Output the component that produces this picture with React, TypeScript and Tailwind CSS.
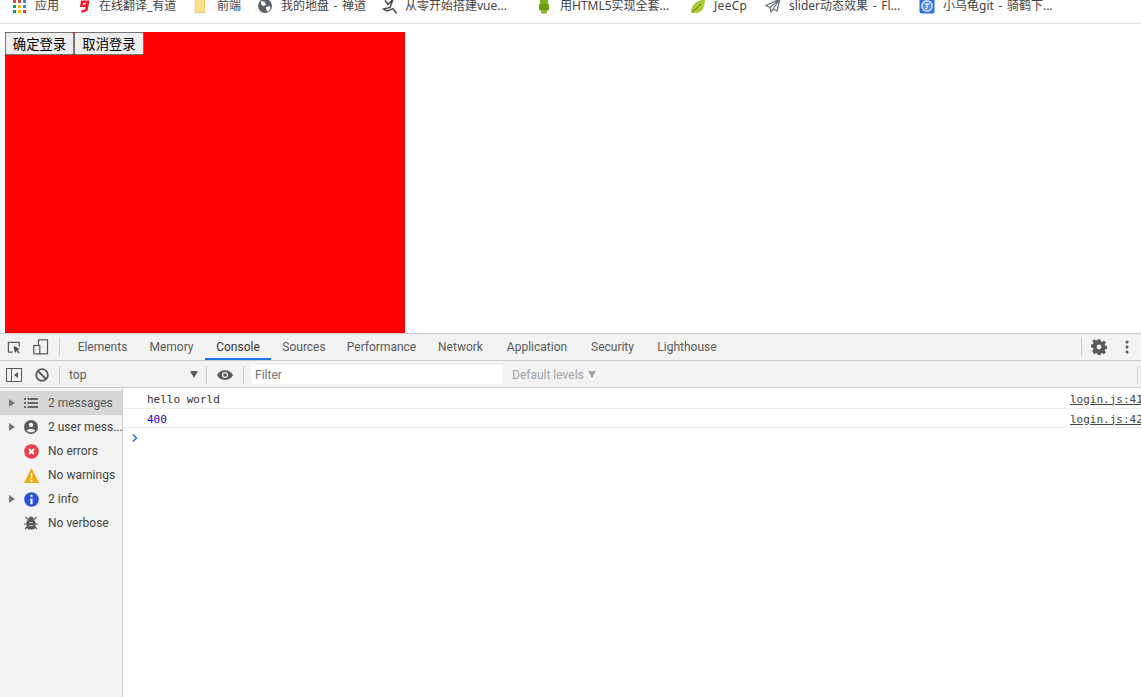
import React from "react";

const ui = "font-['Roboto','Noto_Sans_CJK_SC',sans-serif]";
const marks = "font-['Noto_Sans','Noto_Sans_CJK_SC',sans-serif]";

function Apps() {
  const c = ["#db4437", "#db4437", "#4285f4", "#0f9d58", "#f4b400", "#4285f4", "#0f9d58", "#f4b400", "#db4437"];
  return (
    <svg width="14" height="14" viewBox="0 0 14 14">
      {c.map((f, i) => (
        <rect key={i} x={1 + (i % 3) * 5} y={1 + Math.floor(i / 3) * 5} width="3" height="3" fill={f} />
      ))}
    </svg>
  );
}
const Y9 = () => (
  <svg width="14" height="16" viewBox="0 0 14 16">
    <path d="M4 2.500h8.500L10.500 13 4 15l.5-2.500 3.500-1 .4-2.500H3zM6.300 5l-.6 1.500h3L9 5z" fill="#ee1c2e" fillRule="evenodd" />
  </svg>
);
const Folder = () => (
  <svg width="14" height="16" viewBox="0 0 14 16">
    <path d="M1.500 1h7l1 1.500V1h1v13.500h-9.500z" fill="#fbe08f" stroke="#f2cd6b" strokeWidth="1" />
  </svg>
);
const Globe = () => (
  <svg width="16" height="16" viewBox="0 0 16 16">
    <circle cx="8" cy="8" r="7" fill="#5f6368" />
    <path d="M4 3l4 1 1 3-3 1-2-2zM9 9l4-1 .5 3-3 3-1-2z" fill="#fff" />
  </svg>
);
const Swirl = () => (
  <svg width="16" height="16" viewBox="0 0 16 16" fill="none" stroke="#444" strokeWidth="1.400">
    <path d="M3 2.500 6 6.500 11 1.500 8 9.500 1.500 11 5 13 11 10.500 14.500 15.500" />
  </svg>
);
const Android = () => (
  <svg width="14" height="16" viewBox="0 0 14 16">
    <rect x="3" y="0.500" width="8" height="6" rx="3" fill="#7cad1e" />
    <rect x="2" y="5.500" width="10" height="7" rx="1.500" fill="#6d9e14" />
    <rect x="4" y="12" width="6" height="3.500" rx="1" fill="#8ab82a" />
  </svg>
);
const Leaf = () => (
  <svg width="16" height="16" viewBox="0 0 16 16">
    <path d="M15 1C15 9 12 15 6 15H1.500C0 9 5 3 15 1z" fill="#a9c832" />
    <path d="M2 14C5 11 8 10 11 6" stroke="#557a10" fill="none" />
  </svg>
);
const Plane = () => (
  <svg width="16" height="16" viewBox="0 0 16 16" fill="none" stroke="#6b7280" strokeWidth="1.200">
    <path d="M15 1 1 7.500l4 2 1 4.500 2.500-3 3.500 2zM15 1 5 9.500M15 1 6 14" />
  </svg>
);
const Turtle = () => (
  <svg width="16" height="16" viewBox="0 0 16 16">
    <rect x="0.500" y="0.500" width="15" height="15" rx="2" fill="#2a6ff0" />
    <circle cx="8" cy="8" r="5.200" fill="#5a8ff2" stroke="#dfeaff" strokeWidth="1.400" />
    <path d="M5.500 6h5M8 6v4.500M6 10.500h2" stroke="#fff" strokeWidth="1.200" fill="none" />
  </svg>
);

const bookmarks: [React.ReactNode, string, string, string][] = [
  [<Apps />, "应用", "w-[65px]", "ml-[9px]"],
  [<Y9 />, "在线翻译_有道", "w-[117px]", "ml-[8px]"],
  [<Folder />, "前端", "w-[63px]", "ml-[9px]"],
  [<Globe />, "我的地盘 - 禅道", "w-[125px]", "ml-[8px]"],
  [<Swirl />, "从零开始搭建vue...", "w-[155px]", "ml-[7px]"],
  [<Android />, "用HTML5实现全套...", "w-[153px]", "ml-[9px]"],
  [<Leaf />, "JeeCp", "w-[75px]", "ml-[8px] tracking-[0.3px]"],
  [<Plane />, "slider动态效果 - Fl...", "w-[154px]", "ml-[8px]"],
  [<Turtle />, "小乌龟git - 骑鹤下...", "w-[180px]", "ml-[8px]"],
];

const tabs: [string, string][] = [
  ["Elements", "w-[71px]"],
  ["Memory", "w-[67px]"],
  ["Console", "w-[66px]"],
  ["Sources", "w-[66px]"],
  ["Performance", "w-[89px]"],
  ["Network", "w-[69px]"],
  ["Application", "w-[84px]"],
  ["Security", "w-[67px]"],
  ["Lighthouse", "w-[82px]"],
];

const Tri = () => (
  <svg width="6" height="8" viewBox="0 0 6 8">
    <path d="M0 0l6 4-6 4z" fill="#777" />
  </svg>
);
const ListI = () => (
  <svg width="14" height="10" viewBox="0 0 14 10" fill="#666">
    <path d="M0 0h2v2H0zM3.500 0H14v2H3.500zM0 4h2v2H0zM3.500 4H14v2H3.500zM0 8h2v2H0zM3.500 8H14v2H3.500z" />
  </svg>
);
const UserI = () => (
  <svg width="14" height="14" viewBox="0 0 14 14">
    <circle cx="7" cy="7" r="7" fill="#5a5a5a" />
    <circle cx="7" cy="5" r="2.200" fill="#f3f3f3" />
    <path d="M2.800 10.500C4 8.500 10 8.500 11.200 10.500 10 12 8.500 12.300 7 12.300S4 12 2.800 10.500z" fill="#f3f3f3" />
  </svg>
);
const ErrI = () => (
  <svg width="15" height="15" viewBox="0 0 14 14">
    <circle cx="7" cy="7" r="6.800" fill="#e8404a" />
    <path d="M4.700 4.700l4.600 4.600M9.300 4.700 4.700 9.300" stroke="#fff" strokeWidth="1.800" />
  </svg>
);
const WarnI = () => (
  <svg width="15" height="15" viewBox="0 0 14 14">
    <path d="M7 0l7 14H0z" fill="#f2ab0c" />
    <path d="M6.100 5h1.800l-.3 5H6.400zM6.100 11h1.800v1.800H6.100z" fill="#fff" />
  </svg>
);
const InfoI = () => (
  <svg width="15" height="15" viewBox="0 0 14 14">
    <circle cx="7" cy="7" r="6.800" fill="#2a55d4" />
    <path d="M6 2.500h2v2H6zM6 6h2v5.500H6z" fill="#fff" />
  </svg>
);
const BugI = () => (
  <svg width="14" height="14" viewBox="0 0 14 14" fill="#5a5a5a">
    <rect x="2.500" y="3.500" width="9" height="10" rx="3.500" />
    <circle cx="7" cy="3" r="2.500" />
    <path d="M1.500.800l3 3M12.500.800l-3 3M0 8h3M14 8h-3M1 13l3-3M13 13l-3-3" stroke="#5a5a5a" strokeWidth="1.200" fill="none" />
    <path d="M5 6.500h4M5 9.500h4" stroke="#bdbdbd" strokeWidth="1" fill="none" />
  </svg>
);

const side: [boolean, React.ReactNode, string, boolean][] = [
  [true, <ListI />, "2 messages", true],
  [true, <UserI />, "2 user mess...", false],
  [false, <ErrI />, "No errors", false],
  [false, <WarnI />, "No warnings", false],
  [true, <InfoI />, "2 info", false],
  [false, <BugI />, "No verbose", false],
];

const Sep = () => <div className="w-px h-[18px] bg-[#cfcfcf]" />;

function Sep2() {
  return <div className="self-center w-px h-[18px] bg-[#cfcfcf]" />;
}

export default function App() {
  return (
    <div className={`${ui} w-[1141px] h-[697px] overflow-hidden bg-white flex flex-col text-[12px] leading-none`}>
      {/* bookmarks */}
      <div className={`${marks} h-[24px] shrink-0 border-b border-[#d9d9d9] flex items-center pl-[12px] pb-[12px] text-[#444] [word-spacing:1.5px]`}>
        {bookmarks.map(([icon, label, w, ml]) => (
          <div key={label} className={`${w} shrink-0 flex items-center`}>
            {icon}
            <span className={`${ml} whitespace-nowrap`}>{label}</span>
          </div>
        ))}
      </div>

      {/* page */}
      <div className="h-[309px] shrink-0 pl-[5px] pt-[8px]">
        <div className="w-[400px] h-[301px] bg-[#ff0000] flex items-start">
          <button className="w-[69px] h-[23px] bg-[#efefef] border border-[#767676] rounded-[2px] text-[13.333px] text-black font-['Noto_Sans_CJK_SC',sans-serif]">
            确定登录
          </button>
          <button className="w-[70px] h-[23px] bg-[#efefef] border border-[#767676] rounded-[2px] text-[13.333px] text-black font-['Noto_Sans_CJK_SC',sans-serif]">
            取消登录
          </button>
        </div>
      </div>

      {/* devtools tabs */}
      <div className="h-[28px] shrink-0 bg-[#f3f3f3] border-y border-[#cccccc] flex items-stretch text-[#5a5a5a]">
        <div className="w-[59px] shrink-0 flex items-center pl-[7px] gap-[11px]">
          <svg width="15" height="15" viewBox="0 0 16 16" fill="none">
            <path d="M6 13H1.500V2.500H13V7" stroke="#5a5a5a" strokeWidth="1.300" />
            <path d="M7 6.500l7 3-3 1 2.500 3-1 1-2.500-3-1.500 2.500z" fill="#444" />
          </svg>
          <svg width="16" height="16" viewBox="0 0 16 16" fill="none" stroke="#5a5a5a" strokeWidth="1.200">
            <rect x="5.500" y="0.800" width="9" height="14" />
            <rect x="0.800" y="6.500" width="6" height="8.300" fill="#f3f3f3" />
          </svg>
        </div>
        <Sep2 />
        <div className="flex items-stretch ml-[7px]">
          {tabs.map(([t, w]) => (
            <div
              key={t}
              className={`${w} shrink-0 flex items-center justify-center ${t === "Console" ? "border-b-2 border-[#1a73e8] text-[#333] pt-[2px]" : ""}`}
            >
              {t}
            </div>
          ))}
        </div>
        <div className="flex-1" />
        <div className="flex items-center">
          <Sep />
          <svg className="ml-[9px]" width="16" height="16" viewBox="0 0 16 16" fill="#5a5a5a">
            <path d="M6.500 0h3l.4 2.300 1.300.6L13.200 1.500l2.100 2.100-1.400 2 .6 1.300 2.300.4v3l-2.300.4-.6 1.300 1.400 2-2.100 2.100-2-1.400-1.300.6-.4 2.300h-3l-.4-2.300-1.300-.6-2 1.400L.700 12.500l1.400-2-.6-1.300L-.8 8.800v-3l2.300-.4.6-1.300-1.400-2L2.800 0 4.800 1.400l1.300-.6z" transform="scale(.94) translate(.6 .2)" />
            <circle cx="8" cy="8" r="2.400" fill="#f3f3f3" />
          </svg>
          <svg className="ml-[18px] mr-[12px]" width="4" height="14" viewBox="0 0 4 14" fill="#5a5a5a">
            <circle cx="2" cy="2" r="1.500" />
            <circle cx="2" cy="7" r="1.500" />
            <circle cx="2" cy="12" r="1.500" />
          </svg>
        </div>
      </div>

      {/* console toolbar */}
      <div className="h-[27px] shrink-0 bg-[#f3f3f3] border-b border-[#cccccc] flex items-center pt-[1px] text-[#5a5a5a]">
        <svg className="ml-[6px]" width="16" height="14" viewBox="0 0 16 14" fill="none">
          <rect x="0.500" y="0.500" width="15" height="13" stroke="#5a5a5a" />
          <path d="M5.500 1v12" stroke="#5a5a5a" />
          <path d="M12 4v6L8 7z" fill="#5a5a5a" />
        </svg>
        <svg className="ml-[13px]" width="14" height="14" viewBox="0 0 14 14" fill="none" stroke="#5a5a5a" strokeWidth="1.800">
          <circle cx="7" cy="7" r="5.800" />
          <path d="M3 3l8 8" />
        </svg>
        <div className="ml-[10px]"><Sep /></div>
        <span className="ml-[9px] w-[121px] pt-[1px]">top</span>
        <svg width="8" height="7" viewBox="0 0 8 7"><path d="M0 0h8L4 7z" fill="#5a5a5a" /></svg>
        <div className="ml-[8px]"><Sep /></div>
        <svg className="ml-[10px]" width="16" height="10" viewBox="0 0 16 10">
          <path d="M0 5C3-1.500 13-1.500 16 5 13 11.500 3 11.500 0 5z" fill="#5a5a5a" />
          <circle cx="8" cy="5" r="3" fill="#f3f3f3" />
          <circle cx="8" cy="5" r="1.800" fill="#5a5a5a" />
        </svg>
        <div className="ml-[10px]"><Sep /></div>
        <div className="ml-[7px] w-[252px] h-[19px] bg-white flex items-center pl-[4px] pt-[1px] text-[#757575]">Filter</div>
        <span className="ml-[9px] w-[71px] whitespace-nowrap text-[#a3a3a3]">Default levels</span>
        <svg className="ml-[5px]" width="8" height="7" viewBox="0 0 8 7"><path d="M0 0h8L4 7z" fill="#a3a3a3" /></svg>
        <div className="flex-1" />
        <div className="mr-[3px]"><Sep /></div>
      </div>

      {/* console body */}
      <div className="flex-1 flex min-h-0">
        <div className="w-[123px] shrink-0 bg-[#f3f3f3] border-r border-[#cccccc] pt-[3px]">
          {side.map(([arrow, icon, label, sel]) => (
            <div key={label} className={`h-[24px] flex items-center ${sel ? "bg-[#d6d6d6]" : ""}`}>
              <div className="w-[24px] shrink-0 pl-[9px]">{arrow && <Tri />}</div>
              <div className="w-[24px] shrink-0">{icon}</div>
              <span className={`whitespace-nowrap ${sel ? "text-[#5a5a5a]" : "text-[#444]"}`}>{label}</span>
            </div>
          ))}
        </div>
        <div className="flex-1 font-['DejaVu_Sans_Mono',monospace] text-[11px] min-w-0">
          <div className="h-[21px] border-b border-[#eeeeee] flex items-center justify-between pl-[24px] pt-[2px] text-[#333]">
            <span>hello world</span>
            <span className="underline text-[#444] w-[71px] overflow-hidden whitespace-nowrap">login.js:41</span>
          </div>
          <div className="h-[19px] border-b border-[#eeeeee] flex items-center justify-between pl-[24px] pt-[2px] text-[#1c00cf]">
            <span>400</span>
            <span className="underline text-[#444] w-[71px] overflow-hidden whitespace-nowrap">login.js:42</span>
          </div>
          <div className="h-[19px] flex items-center pl-[9px]">
            <svg width="6" height="8" viewBox="0 0 6 8" fill="none" stroke="#2a6fdb" strokeWidth="1.500">
              <path d="M1 .5 4.500 4 1 7.500" />
            </svg>
          </div>
        </div>
      </div>
    </div>
  );
}
